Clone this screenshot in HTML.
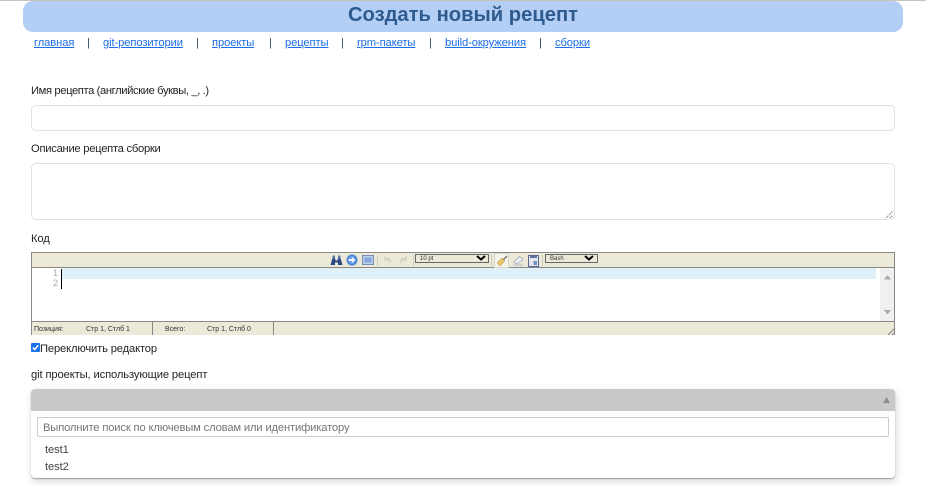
<!DOCTYPE html>
<html lang="ru"><head><meta charset="utf-8"><title>Создать новый рецепт</title>
<style>
html,body{margin:0;padding:0;background:#fff}
body{position:relative;width:926px;height:486px;overflow:hidden;font-family:"Liberation Sans",sans-serif;color:#212529}
.a{position:absolute;white-space:nowrap}
.l{font-size:11.2px;line-height:14px;color:#212529}
.n{top:36px;font-size:11.2px;line-height:14px;letter-spacing:-.1px;color:#1a6ee8;text-decoration:underline}
.s{top:36px;font-size:11px;line-height:14px;color:#33475b}
.box{position:absolute;box-sizing:border-box;background:#fff;border:1px solid #dee2e6;border-radius:5px}
.st{font-size:7px;line-height:9px;color:#333;top:325px}
svg{position:absolute;overflow:visible}
.sel{position:absolute;box-sizing:border-box;height:9px;top:254px;border:1px solid #666;background:#ece9d8;font-size:6px;line-height:8px;padding-left:4px;color:#333}
.sep{position:absolute;top:255px;width:1px;height:11px;background:#cfccbc}
</style></head><body>
<div class="a" style="left:0;top:0;width:926px;height:1px;background:#c8c4bc"></div>
<div class="a" style="left:23px;top:1px;width:880px;height:31px;background:#b4cff5;border-radius:10px"></div>
<div class="a" style="left:23px;top:2px;width:880px;height:27px;line-height:27px;text-align:center;font-size:20.2px;font-weight:bold;color:#2e5a8e">Создать новый рецепт</div>

<a class="a n" style="left:34px">главная</a><span class="a s" style="left:87px">|</span>
<a class="a n" style="left:103px">git-репозитории</a><span class="a s" style="left:196px">|</span>
<a class="a n" style="left:212px">проекты</a><span class="a s" style="left:269px">|</span>
<a class="a n" style="left:285px">рецепты</a><span class="a s" style="left:341px">|</span>
<a class="a n" style="left:357px">rpm-пакеты</a><span class="a s" style="left:429px">|</span>
<a class="a n" style="left:445px">build-окружения</a><span class="a s" style="left:539px">|</span>
<a class="a n" style="left:555px">сборки</a>

<div class="a l" style="left:31px;top:84px;letter-spacing:-.38px">Имя рецепта (английские буквы, _, .)</div>
<div class="box" style="left:31px;top:105px;width:864px;height:26px"></div>
<div class="a l" style="left:31px;top:142px;letter-spacing:-.26px">Описание рецепта сборки</div>
<div class="box" style="left:31px;top:163px;width:864px;height:57px"></div>
<svg style="left:885px;top:210px" width="9" height="9"><path d="M1 8L8 1M5 8L8 5" stroke="#555" stroke-width="1" stroke-dasharray="1 1"/></svg>
<div class="a l" style="left:31px;top:232px;letter-spacing:-.1px">Код</div>

<!-- editor -->
<div class="a" style="left:31px;top:252px;width:864px;height:83px;box-sizing:border-box;border:1px solid #888;border-bottom:0;background:#ece9d8"></div>
<div class="a" style="left:32px;top:268px;width:862px;height:53px;background:#fff;border-top:1px solid #888;border-bottom:1px solid #888;margin-top:-1px"></div>
<div class="a" style="left:62px;top:268px;width:814px;height:11px;background:#e0f0f8"></div>
<div class="a" style="left:61px;top:269px;width:1px;height:20px;background:#000"></div>
<div class="a" style="left:50px;top:268px;width:8px;font:9px/10px 'Liberation Sans',sans-serif;color:#aaa;text-align:right">1<br>2</div>
<div class="a" style="left:880px;top:268px;width:14px;height:53px;background:#f0f0f0"></div>
<svg style="left:884px;top:275px" width="8" height="40"><path d="M3.500 0L7 4.500H0Z" fill="#aaa"/><path d="M0 35H7L3.500 39.500Z" fill="#aaa"/></svg>

<!-- toolbar icons -->
<svg style="left:330px;top:255px" width="13" height="11"><path d="M0.500 10L2.500 3H5L5.500 5.500H7.500L8 3H10.500L12.500 10H8V7.500H5V10Z" fill="#2a4a86"/><rect x="2.500" y="0.500" width="2.500" height="3" fill="#5f77a6"/><rect x="8" y="0.500" width="2.500" height="3" fill="#5f77a6"/></svg>
<svg style="left:346px;top:254px" width="12" height="12"><circle cx="6" cy="6" r="5.500" fill="#4a86d8"/><circle cx="6" cy="6" r="3.800" fill="#6ea2ea"/><path d="M2.500 5H6V3L9.500 6L6 9V7H2.500Z" fill="#f0f5fc"/></svg>
<svg style="left:362px;top:255px" width="12" height="10"><rect x=".5" y=".5" width="11" height="9" fill="#b8cdec" stroke="#7890b5"/><rect x="2.500" y="2.500" width="7" height="5" fill="#88a8da"/></svg>
<div class="sep" style="left:377px"></div>
<svg style="left:382px;top:255px" width="10" height="10"><path d="M3 1V5H7L5.500 3.500C7.500 3 8.500 5 8 8" fill="none" stroke="#d6d3c4" stroke-width="1.500"/></svg>
<svg style="left:399px;top:255px" width="10" height="10"><path d="M7 1V5H3L4.500 3.500C2.500 3 1.500 5 2 8" fill="none" stroke="#d6d3c4" stroke-width="1.500"/></svg>
<div class="sep" style="left:413px"></div>
<div class="sel" style="left:415px;width:74px">10 pt</div>
<svg style="left:476px;top:255px" width="10" height="6"><path d="M1 1L5 4.500L9 1" fill="none" stroke="#000" stroke-width="2"/></svg>
<div class="sep" style="left:491px"></div>
<div class="a" style="left:494px;top:253px;width:15px;height:15px;background:#f5f4ec;box-sizing:border-box;border:1px solid #d8d6c8"></div>
<svg style="left:496px;top:255px" width="12" height="12"><path d="M7 5L11 1" stroke="#777" stroke-width="1.500"/><path d="M1 8L6 3L9 6L4 11Z" fill="#e8c860" stroke="#a08a48" stroke-width=".5"/></svg>
<svg style="left:512px;top:255px" width="12" height="11"><path d="M2 7L7.500 1.500L11 4L6 8.500H3Z" fill="#f0f0f4" stroke="#a0a8bc" stroke-width=".8"/><path d="M1 10H11" stroke="#b4bccc"/></svg>
<svg style="left:528px;top:255px" width="12" height="12"><rect x=".5" y=".5" width="10" height="11" fill="#e6e6ee" stroke="#59668c"/><rect x="2" y="1" width="7" height="2" fill="#5a74a8"/><rect x="5.500" y="6" width="3.500" height="4" fill="#6c90c8"/></svg>
<div class="sep" style="left:542px"></div>
<div class="sel" style="left:545px;width:53px">Bash</div>
<svg style="left:584px;top:255px" width="10" height="6"><path d="M1 1L5 4.500L9 1" fill="none" stroke="#000" stroke-width="2"/></svg>

<!-- status bar -->
<div class="a st" style="left:34px">Позиция:</div>
<div class="a st" style="left:86px">Стр 1, Стлб 1</div>
<div class="a" style="left:152px;top:322px;width:1px;height:13px;background:#888"></div>
<div class="a st" style="left:165px">Всего:</div>
<div class="a st" style="left:207px">Стр 1, Стлб 0</div>
<div class="a" style="left:273px;top:322px;width:1px;height:13px;background:#888"></div>
<svg style="left:888px;top:328px" width="7" height="7"><path d="M0 7L7 0M4 7L7 4" stroke="#888" stroke-width="1"/></svg>

<!-- checkbox -->
<svg style="left:31px;top:343px" width="9" height="9"><rect width="9" height="9" rx="1" fill="#1a73e8"/><path d="M1.800 4.500L3.700 6.500L7.300 2.200" fill="none" stroke="#fff" stroke-width="1.500"/></svg>
<div class="a l" style="left:40px;top:342px;letter-spacing:-.15px">Переключить редактор</div>
<div class="a l" style="left:31px;top:368px;letter-spacing:-.12px">git проекты, использующие рецепт</div>

<!-- select -->
<div class="a" style="left:31px;top:389px;width:864px;height:89px;background:#fff;border-radius:4px;box-shadow:1px 3px 8px rgba(0,0,0,.16),0 1px 1px rgba(0,0,0,.3)"></div>
<div class="a" style="left:31px;top:389px;width:864px;height:22px;background:#c9c9c9;border-radius:4px 4px 0 0"></div>
<svg style="left:883px;top:397px" width="7" height="7"><path d="M3.500 0L7 6H0Z" fill="#8f8f8f"/></svg>
<div class="a" style="left:37px;top:417px;width:852px;height:20px;box-sizing:border-box;border:1px solid #ccc;border-radius:2px;background:#fff;padding-left:5px;font-size:11.2px;line-height:20px;letter-spacing:-.15px;color:#757575">Выполните поиск по ключевым словам или идентификатору</div>
<div class="a" style="left:45px;top:443px;font-size:11.2px;line-height:14px;letter-spacing:-.1px;color:#444">test1</div>
<div class="a" style="left:45px;top:460px;font-size:11.2px;line-height:14px;letter-spacing:-.1px;color:#444">test2</div>
</body></html>
